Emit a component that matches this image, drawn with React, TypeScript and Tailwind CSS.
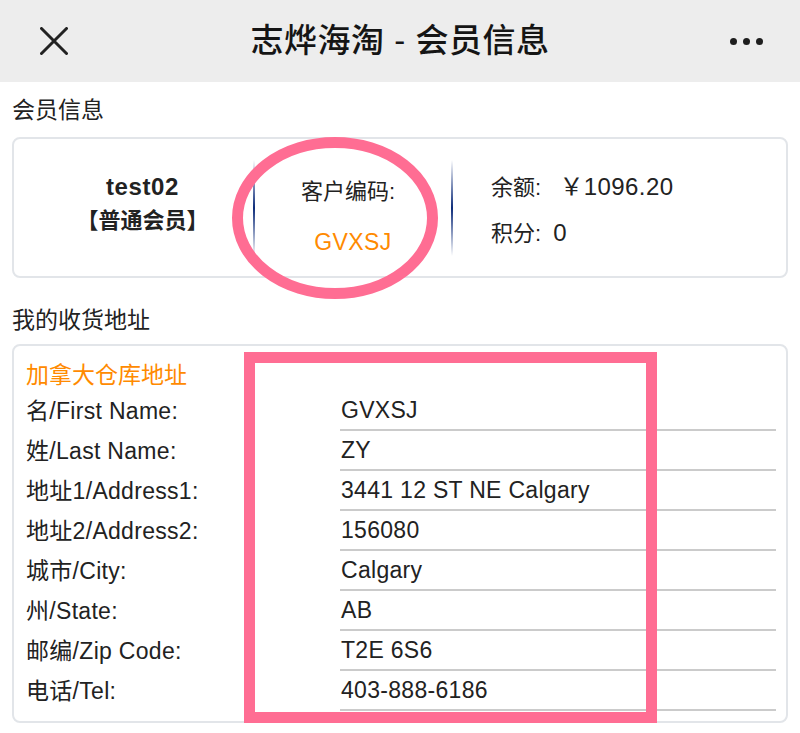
import React from "react";

const font = { fontFamily: '"Liberation Sans", "Noto Sans CJK SC", sans-serif' };

const rows: [string, string][] = [
  ["名/First Name:", "GVXSJ"],
  ["姓/Last Name:", "ZY"],
  ["地址1/Address1:", "3441 12 ST NE Calgary"],
  ["地址2/Address2:", "156080"],
  ["城市/City:", "Calgary"],
  ["州/State:", "AB"],
  ["邮编/Zip Code:", "T2E 6S6"],
  ["电话/Tel:", "403-888-6186"],
];

export default function App() {
  return (
    <div
      className="relative w-[800px] h-[733px] overflow-hidden bg-white text-[#222]"
      style={font}
    >
      {/* Header */}
      <div className="h-[82px] bg-[#ededed] grid grid-cols-[1fr_auto_1fr] items-center">
        <div className="pl-[40px] flex items-center">
          <svg width="28" height="28" viewBox="0 0 28 28">
            <path d="M1.5 1.5 L26.5 26.5 M26.5 1.5 L1.5 26.5" stroke="#222" strokeWidth="3" strokeLinecap="round" />
          </svg>
        </div>
        <div className="text-[33px] leading-[40px] font-medium text-[#151515] tracking-[0.5px]">志烨海淘 - 会员信息</div>
        <div className="flex justify-end pr-[37px] gap-[6px]">
          <span className="w-[7px] h-[7px] rounded-full bg-[#1e1e1e]" />
          <span className="w-[7px] h-[7px] rounded-full bg-[#1e1e1e]" />
          <span className="w-[7px] h-[7px] rounded-full bg-[#1e1e1e]" />
        </div>
      </div>

      <div className="px-[12px]">
        <div className="mt-[12px] text-[23px] leading-[32px]">会员信息</div>
        {/* Member card */}
        <div className="mt-[11px] h-[141px] border-2 border-[#e2e5e9] rounded-[8px] flex text-[22px]">
          <div className="w-[239px] pl-[18px] pt-[31px] flex flex-col items-center">
            <div className="leading-[34px] font-bold text-[24px] tracking-[0.6px]">test02</div>
            <div className="leading-[34px] font-bold">【普通会员】</div>
          </div>
          <div className="self-center w-[2px] h-[96px] bg-gradient-to-b from-transparent via-[#0d2c7a] to-transparent" />
          <div className="w-[196px] pt-[36px] flex flex-col items-center">
            <div className="leading-[34px] pr-[10px]">客户编码:</div>
            <div className="mt-[16px] leading-[34px] text-[#ff8a00] text-[23px] tracking-[0.4px]">GVXSJ</div>
          </div>
          <div className="self-center w-[2px] h-[96px] bg-gradient-to-b from-transparent via-[#0d2c7a] to-transparent" />
          <div className="pl-[38px] pt-[31px] flex flex-col">
            <div className="leading-[34px]">
              余额:&nbsp;&nbsp;&nbsp;<span className="text-[24px] tracking-[0.4px]">￥1096.20</span>
            </div>
            <div className="mt-[11px] leading-[34px]">
              积分:&nbsp;&nbsp;<span className="text-[24px]">0</span>
            </div>
          </div>
        </div>

        <div className="mt-[26px] text-[23px] leading-[32px]">我的收货地址</div>
        {/* Address card */}
        <div className="mt-[8px] border-2 border-[#e2e5e9] rounded-[8px] pl-[12px] pr-[10px] pt-[13px] pb-[10px]">
          <div className="text-[23px] leading-[32px] text-[#ff8a00]">加拿大仓库地址</div>
          {rows.map(([label, value]) => (
            <div key={label} className="h-[40px] flex text-[23px] tracking-[0.3px]">
              <div className="w-[314px] flex items-center">{label}</div>
              <div className="flex-1 flex items-center pl-[1px] border-b-2 border-[#cbcbcb]">{value}</div>
            </div>
          ))}
        </div>
      </div>

      {/* Pink ellipse annotation */}
      <svg className="absolute left-0 top-0 pointer-events-none" width="800" height="733">
        <ellipse cx="335" cy="218" rx="97.5" ry="75.5" fill="none" stroke="#ff6d93" strokeWidth="11" />
      </svg>
      {/* Pink rectangle annotation */}
      <div className="absolute left-[244px] top-[352px] w-[413px] h-[371px] border-[11px] border-[#ff6d93] pointer-events-none" />
    </div>
  );
}
